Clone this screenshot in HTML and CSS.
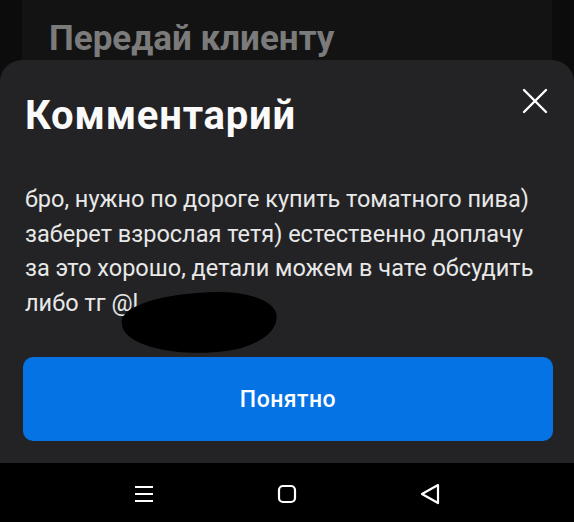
FILE: index.html
```html
<!DOCTYPE html>
<html lang="ru">
  <head>
    <meta charset="UTF-8" />
    <meta name="viewport" content="width=device-width, initial-scale=1.0" />
    <title>Комментарий</title>
    <link rel="stylesheet" href="styles.css">
  </head>
  <body>
    <div class="screen">
      <div class="behind">
        <div class="behind-card">
          <h2>Передай клиенту</h2>
        </div>
      </div>

      <div class="sheet">
        <div class="sheet-head">
          <h1>Комментарий</h1>
          <button class="close" aria-label="Закрыть">
            <svg width="26" height="26" viewBox="0 0 26 26">
              <path d="M2 2L24 24M24 2L2 24" stroke="#fff" stroke-width="2.4" stroke-linecap="round" />
            </svg>
          </button>
        </div>

        <p class="comment">
          бро, нужно по дороге купить томатного пива) заберет взрослая тетя) естественно доплачу за это хорошо, детали можем в чате обсудить либо тг @l
          <span class="scribble"></span>
        </p>

        <button class="ok">Понятно</button>
      </div>

      <div class="navbar">
        <svg width="20" height="18" viewBox="0 0 20 18">
          <path d="M1 2H19M1 9H19M1 16H19" stroke="#fff" stroke-width="2.2" />
        </svg>
        <svg width="20" height="20" viewBox="0 0 20 20">
          <rect x="2" y="2" width="16" height="16" rx="4" fill="none" stroke="#fff" stroke-width="2.2" />
        </svg>
        <svg width="20" height="22" viewBox="0 0 20 22">
          <path d="M18 2L2 11L18 20Z" fill="none" stroke="#fff" stroke-width="2.2" stroke-linejoin="round" />
        </svg>
      </div>
    </div>
  </body>
</html>
```

FILE: styles.css
```css
:root {
  --sheet: #232325;
  --blue: #0673e5;
}

* {
  box-sizing: border-box;
}

body {
  margin: 0;
  background: #0c0c0c;
  font-family: Roboto, "Noto Sans", sans-serif;
}

.screen {
  width: 574px;
  height: 522px;
  display: flex;
  flex-direction: column;
  overflow: hidden;
}

.behind {
  height: 60px;
  padding: 0 22px;
  overflow: hidden;
  flex-shrink: 0;
}

.behind-card {
  background: #131313;
  height: 100px;
  padding: 19px 27px 0;
}

.behind-card h2 {
  margin: 0;
  color: #7b7b7b;
  font-size: 35px;
  font-weight: 700;
  line-height: 40px;
}

.sheet {
  background: var(--sheet);
  border-radius: 22px 22px 0 0;
  padding: 0 21px 0 23px;
  flex: 1;
}

.sheet-head {
  display: flex;
  justify-content: space-between;
  align-items: flex-start;
  padding-top: 28px;
}

.sheet-head h1 {
  margin: 0;
  padding: 5px 0 0 2px;
  color: #fafafa;
  font-size: 40px;
  font-weight: 700;
  letter-spacing: 0.8px;
  line-height: 46px;
}

.close {
  background: none;
  border: 0;
  padding: 0;
  margin: 0 5px 0 0;
  width: 26px;
  height: 26px;
}

.comment {
  position: relative;
  margin: 43px 0 0 2px;
  color: #e8e8e8;
  font-size: 23.5px;
  line-height: 34.5px;
  padding-right: 10px;
}

.scribble {
  position: absolute;
  left: 97px;
  top: 111px;
  width: 155px;
  height: 60px;
  background: #000;
  border-radius: 50% 45% 40% 60% / 40% 50% 55% 60%;
  transform: rotate(-4deg);
}

.ok {
  display: block;
  width: 530px;
  height: 84px;
  margin-top: 37px;
  border: 0;
  border-radius: 10px;
  background: var(--blue);
  color: #fff;
  font-family: Roboto, sans-serif;
  font-size: 23px;
  font-weight: 500;
  letter-spacing: 0.5px;
}

.navbar {
  height: 59px;
  background: #000;
  flex-shrink: 0;
  display: flex;
  justify-content: center;
  align-items: center;
  gap: 123px;
  padding: 2px 0 0 0;
}
```
